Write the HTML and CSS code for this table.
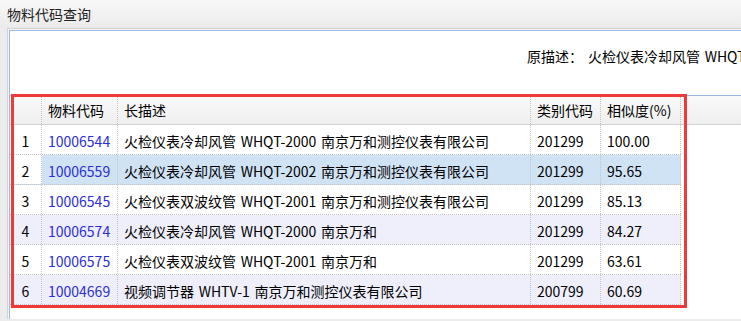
FILE: index.html
```html
<!DOCTYPE html>
<html lang="zh-CN">
<head>
<meta charset="utf-8">
<title>物料代码查询</title>
<link rel="stylesheet" href="styles.css">
</head>
<body>
<div class="titlebar">物料代码查询</div>
<div class="panel">
  <div class="inner">
    <div class="form">
      <span class="label">原描述：</span><span class="orig">火检仪表冷却风管 WHQT-2000 南京万和测控仪表有限公司</span>
    </div>
    <div class="grid">
      <div class="row head">
        <div class="cell num"></div>
        <div class="cell">物料代码</div>
        <div class="cell">长描述</div>
        <div class="cell">类别代码</div>
        <div class="cell">相似度(%)</div>
        <div class="cell filler"></div>
      </div>
      <div class="row">
        <div class="cell num">1</div>
        <div class="cell code">10006544</div>
        <div class="cell">火检仪表冷却风管 WHQT-2000 南京万和测控仪表有限公司</div>
        <div class="cell">201299</div>
        <div class="cell">100.00</div>
      </div>
      <div class="row sel">
        <div class="cell num">2</div>
        <div class="cell code">10006559</div>
        <div class="cell">火检仪表冷却风管 WHQT-2002 南京万和测控仪表有限公司</div>
        <div class="cell">201299</div>
        <div class="cell">95.65</div>
      </div>
      <div class="row">
        <div class="cell num">3</div>
        <div class="cell code">10006545</div>
        <div class="cell">火检仪表双波纹管 WHQT-2001 南京万和测控仪表有限公司</div>
        <div class="cell">201299</div>
        <div class="cell">85.13</div>
      </div>
      <div class="row alt">
        <div class="cell num">4</div>
        <div class="cell code">10006574</div>
        <div class="cell">火检仪表冷却风管 WHQT-2000 南京万和</div>
        <div class="cell">201299</div>
        <div class="cell">84.27</div>
      </div>
      <div class="row">
        <div class="cell num">5</div>
        <div class="cell code">10006575</div>
        <div class="cell">火检仪表双波纹管 WHQT-2001 南京万和</div>
        <div class="cell">201299</div>
        <div class="cell">63.61</div>
      </div>
      <div class="row alt">
        <div class="cell num">6</div>
        <div class="cell code">10004669</div>
        <div class="cell">视频调节器 WHTV-1 南京万和测控仪表有限公司</div>
        <div class="cell">200799</div>
        <div class="cell">60.69</div>
      </div>
      <div class="highlight"></div>
    </div>
  </div>
</div>
</body>
</html>
```
FILE: styles.css
```css
html, body {
  margin: 0;
  padding: 0;
}
body {
  width: 741px;
  height: 321px;
  overflow: hidden;
  background: #ececec;
  font-family: "Noto Sans CJK SC", "Microsoft YaHei", sans-serif;
  font-size: 14px;
  color: #000;
  word-spacing: 1.5px;
}
.titlebar {
  height: 28px;
  line-height: 28px;
  padding-left: 7px;
  color: #222;
  background: linear-gradient(#f8f8f8, #ebebeb);
}
.panel {
  margin-left: 7px;
  border-top: 1px solid #d2d2d2;
  border-left: 1px solid #d2d2d2;
  padding: 1px 0 0 1px;
  background: #f4f4f4;
  height: 291px;
  box-sizing: border-box;
}
.inner {
  border-top: 1px solid #99bbe8;
  border-left: 1px solid #99bbe8;
  background: #fff;
  height: 100%;
  box-sizing: border-box;
}
.form {
  height: 64px;
  box-sizing: border-box;
  padding: 15px 0 0 517px;
  line-height: 20px;
  white-space: nowrap;
  overflow: hidden;
}
.orig {
  margin-left: 5px;
}
.grid {
  position: relative;
  border-top: 1px solid #99bbe8;
}
.row {
  display: grid;
  grid-template-columns: 32px 76px 413px 70px 80px;
  height: 30px;
  box-sizing: border-box;
  border-bottom: 1px dotted #c4c4c4;
  width: 671px;
  background: #fff;
}
.row.head {
  grid-template-columns: 32px 76px 413px 70px 80px 1fr;
  width: auto;
  height: 29px;
  border-bottom: 1px solid #d0d0d0;
  background: linear-gradient(#fafafa, #efefef);
}
.row.alt {
  background: #efeffb;
}
.row.sel {
  background: #cfe3f5;
}
.row.sel .num {
  background: #fff;
}
.cell {
  box-sizing: border-box;
  border-right: 1px dotted #c4c4c4;
  padding: 4px 0 0 6px;
  line-height: 24px;
  white-space: nowrap;
  overflow: hidden;
}
.head .cell {
  padding-top: 2px;
}
.cell.num {
  padding-left: 0;
  text-align: center;
}
.cell.filler {
  border-right: none;
}
.cell.code {
  color: #2c2cd8;
}
.highlight {
  position: absolute;
  left: 1px;
  top: -2px;
  width: 676px;
  height: 214px;
  box-sizing: border-box;
  border: 3px solid #f03a3a;
  pointer-events: none;
}
```
